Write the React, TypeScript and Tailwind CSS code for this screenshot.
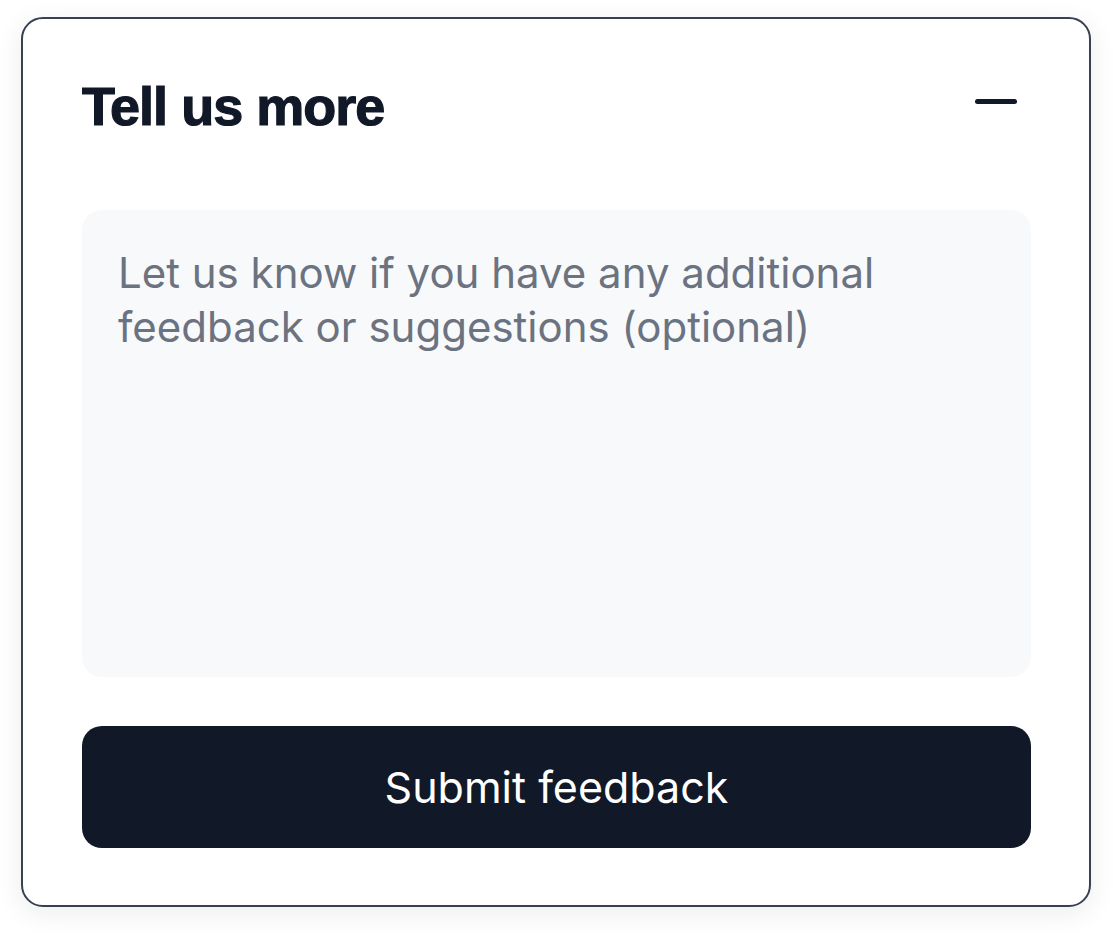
import React, { useState } from 'react';

const FeedbackCard: React.FC = () => {
    const [text, setText] = useState('');

    return (
        <div className="w-[1070px] rounded-[22px] border-2 border-[#374151] bg-white pl-[59px] pr-[58px] pt-[60px] pb-[57px] shadow-[0_6px_28px_rgba(15,23,42,0.08)]">
            <div className="flex items-start justify-between">
                <h2 className="text-[54px] leading-none font-bold tracking-[-0.018em] text-[#111827] [-webkit-text-stroke:1.2px_#111827] font-['Liberation_Sans',Arial,sans-serif]">
                    Tell us more
                </h2>
                <button type="button" aria-label="Collapse" className="mt-[20px] mr-[14px]">
                    <span className="block h-[5px] w-[42px] rounded-full bg-[#111827]" />
                </button>
            </div>

            <textarea
                className="mt-[77px] block h-[467px] w-full resize-none rounded-[20px] bg-[#f8f9fb] pl-[36px] pr-[36px] pt-[36px] text-[42px] leading-[54px] text-[#111827] placeholder:text-[#6b7280] outline-none"
                placeholder="Let us know if you have any additional feedback or suggestions (optional)"
                value={text}
                onChange={(e) => setText(e.target.value)}
            />

            <button
                type="submit"
                className="mt-[49px] flex h-[122px] w-full items-center justify-center rounded-[20px] bg-[#111827] text-[43px] font-normal text-white"
            >
                Submit feedback
            </button>
        </div>
    );
};

export default function App() {
    return (
        <div className="min-h-screen bg-white pl-[21px] pt-[17px] font-['Inter',sans-serif]">
            <FeedbackCard />
        </div>
    );
}
